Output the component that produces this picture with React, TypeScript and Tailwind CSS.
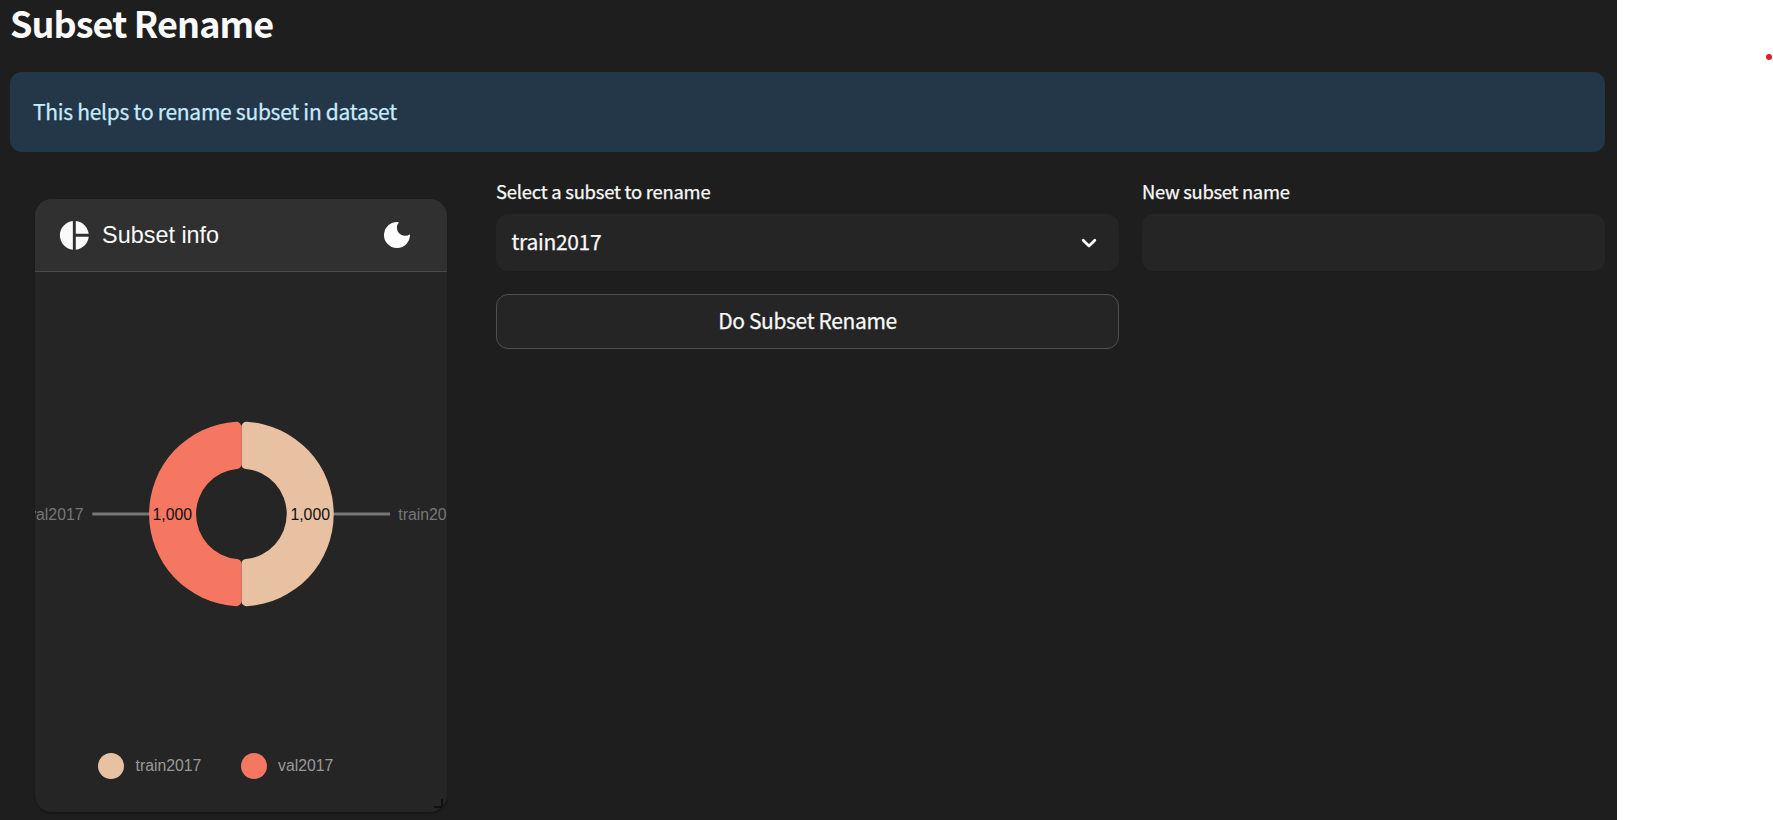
import { MdPieChart } from "react-icons/md";

const HALF_RING =
  "M0 -87.16 A5 5 0 0 1 5.29 -92.15 A92.3 92.3 0 0 1 5.29 92.15 A5 5 0 0 1 0 87.16 V50.05 A5 5 0 0 1 4.5 45.08 A45.3 45.3 0 0 0 4.5 -45.08 A5 5 0 0 1 0 -50.05 Z";

function DonutChart() {
  return (
    <svg
      className="block h-[446px] w-[412px] shrink-0 font-['Liberation_Sans',sans-serif] text-[15.8px]"
      viewBox="35 272 412 446"
    >
      <g stroke="#777" strokeWidth="2.9">
        <path d="M92.3 514H150" />
        <path d="M333 514H390" />
      </g>
      <path d={HALF_RING} fill="#e7c1a2" transform="translate(241.4 514)" />
      <path d={HALF_RING} fill="#f57661" transform="translate(241.4 514) scale(-1 1)" />
      <g fill="#777">
        <text x="83.5" y="519.8" textAnchor="end">val2017</text>
        <text x="398.3" y="519.8">train2017</text>
      </g>
      <g fill="#111" textAnchor="middle">
        <text x="172.3" y="519.8">1,000</text>
        <text x="310.2" y="519.8">1,000</text>
      </g>
    </svg>
  );
}

function MoonIcon() {
  return (
    <svg className="size-[26px]" viewBox="0 0 26 26" fill="white">
      <path d="M15 .15A13 13 0 1 0 26 12.2A8.2 8.2 0 0 1 15 .15Z" />
    </svg>
  );
}

function SubsetCard() {
  return (
    <section className="relative flex h-[613px] w-[412px] flex-col overflow-hidden rounded-[17px] bg-[#252525] font-['Liberation_Sans',sans-serif] shadow-[0_2px_2px_rgba(0,0,0,0.25)]">
      <header className="flex h-[73px] shrink-0 items-center border-b border-[#4a4a4a] bg-[#303030] pr-[37px] pl-[22px]">
        <MdPieChart size={34.6} className="text-[#fafafa]" />
        <h2 className="ml-[10.5px] grow text-[23.4px] leading-[34px] text-[#fafafa]">Subset info</h2>
        <MoonIcon />
      </header>
      <DonutChart />
      <div className="mt-[35px] flex h-[26px] items-center pl-[63px] text-[15.8px] leading-[26px] text-[#999]">
        <span className="size-[26px] rounded-full bg-[#e7c1a2]" />
        <span className="ml-[11.5px] w-[105px]">train2017</span>
        <span className="size-[26px] rounded-full bg-[#f57661]" />
        <span className="ml-[11.5px]">val2017</span>
      </div>
      <span className="absolute right-[4px] bottom-[4px] size-[9px] border-r-2 border-b-2 border-[#111]" />
    </section>
  );
}

export default function App() {
  return (
    <div className="flex h-[820px] w-full overflow-hidden bg-white font-['Noto_Sans_CJK_SC',sans-serif] text-[#fafafa]">
      <main className="flex w-[1617px] shrink-0 flex-col bg-[#1e1e1e] pr-[12px] pl-[10px]">
        <h1 className="h-[72px] text-[36px] leading-[45px] font-bold tracking-[-0.9px] whitespace-nowrap">Subset Rename</h1>
        <div className="flex h-[80px] shrink-0 items-center rounded-[12px] bg-[#243748] pl-[23px] text-[21px] tracking-[-0.27px] text-[#c7ebff] [-webkit-text-stroke:0.25px_#c7ebff]">
          This helps to rename subset in dataset
        </div>
        <div className="flex [-webkit-text-stroke:0.25px]">
          <div className="w-[486px] shrink-0 pt-[47px] pl-[25px] [-webkit-text-stroke:0]">
            <SubsetCard />
          </div>
          <div className="w-[623px] shrink-0 pt-[28px]">
            <label className="block h-[34px] text-[18.4px] leading-[22px] tracking-[-0.22px] whitespace-nowrap">Select a subset to rename</label>
            <div className="flex h-[57px] items-center justify-between rounded-[12px] bg-[#252525] pr-[21px] pl-[15.5px] text-[21px] leading-[30px] tracking-[-0.3px]">
              <span className="pb-[3px]">train2017</span>
              <svg width="18" height="18" viewBox="0 0 18 18" fill="none" stroke="white" strokeWidth="2.8" strokeLinecap="round" strokeLinejoin="round">
                <path d="M3.2 6.3 9 12l5.8-5.7" />
              </svg>
            </div>
            <button className="mt-[23px] flex h-[55px] w-full items-center justify-center rounded-[12px] border border-[#505050] bg-[#252525] pb-[1px] text-[21px] tracking-[-0.36px]">
              Do Subset Rename
            </button>
          </div>
          <div className="ml-[23px] grow pt-[28px]">
            <label className="block h-[34px] text-[18.4px] leading-[22px] tracking-[-0.3px] whitespace-nowrap">New subset name</label>
            <div className="h-[57px] rounded-[12px] bg-[#252525]" />
          </div>
        </div>
      </main>
      <aside className="flex grow justify-end pt-[54px] pr-[1px]">
        <span className="size-[6px] rounded-full bg-[#e51c23]" />
      </aside>
    </div>
  );
}
